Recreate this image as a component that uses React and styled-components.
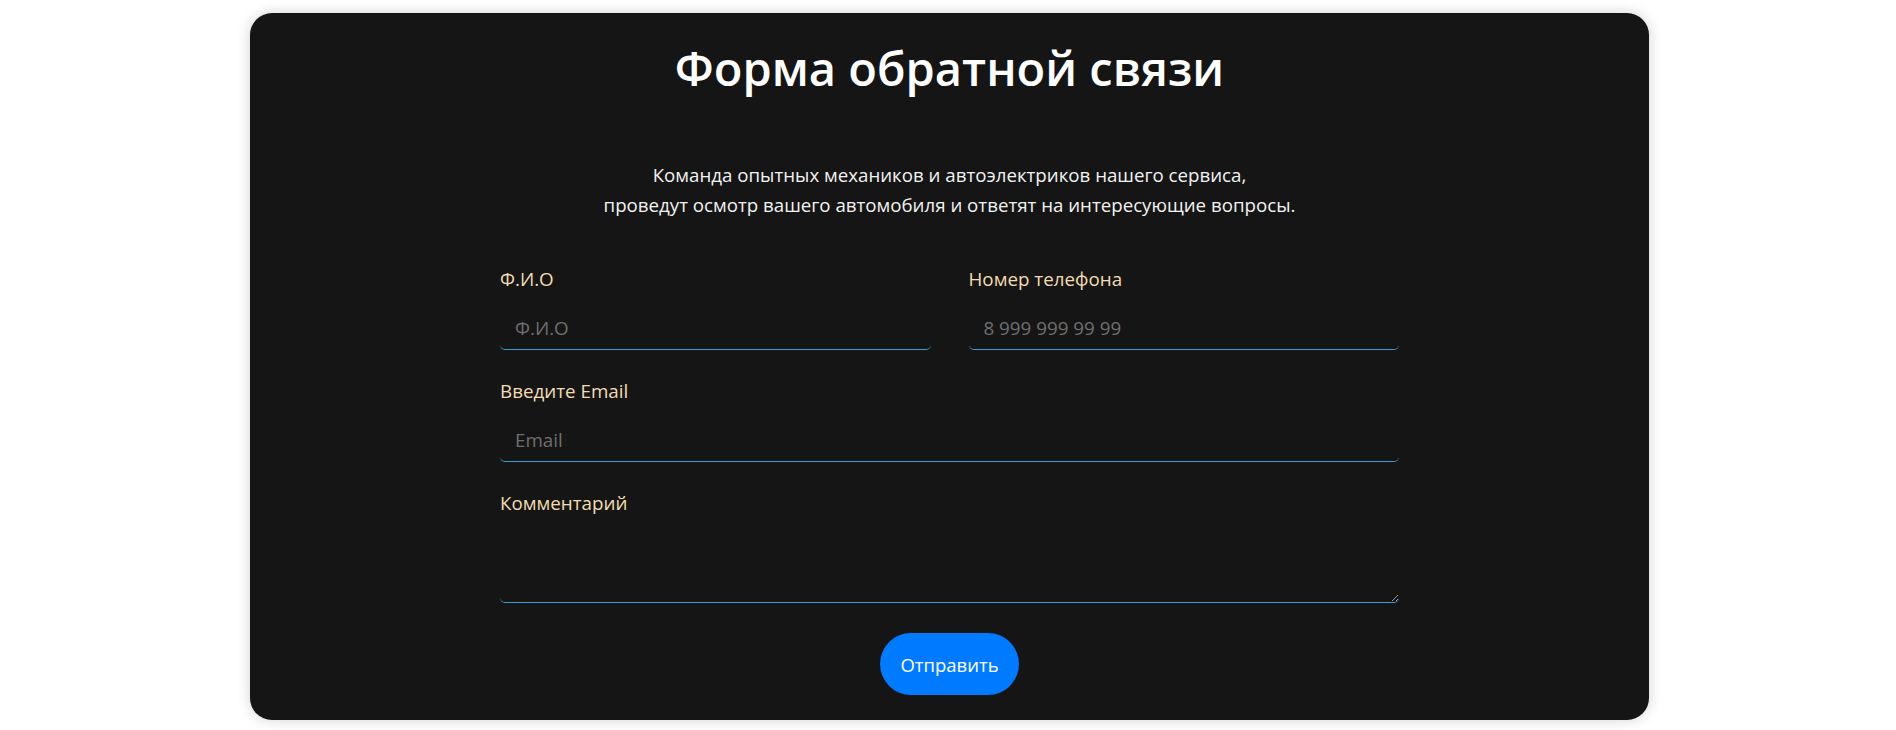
import React from 'react'
import styled, { createGlobalStyle } from 'styled-components'

const GlobalStyle = createGlobalStyle`
  * {
    box-sizing: border-box;
  }
  body {
    margin: 0;
    background: #ffffff;
    font-family: 'Open Sans', 'Noto Sans', sans-serif;
  }
`

const Page = styled.div`
  padding: 13px 0 10px 3px;
`

const Card = styled.section`
  width: 1399px;
  margin: 0 auto;
  padding: 27px 0 25px;
  background-color: #151515;
  border-radius: 22px;
  box-shadow: 0 0 14px rgba(0, 0, 0, 0.18);
  display: flex;
  flex-direction: column;
  align-items: center;
`

const Title = styled.h1`
  margin: 0;
  font-size: 47px;
  font-weight: 600;
  line-height: 57px;
  color: #ffffff;
  text-align: center;
`

const Subtitle = styled.p`
  margin: 63px 0 47px;
  font-size: 18.7px;
  line-height: 30px;
  color: #f2f2f2;
  text-align: center;
`

const Form = styled.form`
  width: 899px;
  display: flex;
  flex-direction: column;
  align-items: center;
`

const Row = styled.div`
  width: 100%;
  display: grid;
  grid-template-columns: ${props => (props.cols === 2 ? '1fr 1fr' : '1fr')};
  column-gap: 38px;
  margin-bottom: ${props => (props.last ? '30px' : '29px')};
`

const Field = styled.div`
  display: flex;
  flex-direction: column;
`

const Label = styled.label`
  font-size: 18.8px;
  line-height: 24px;
  color: #f3dcb3;
  margin-bottom: 15px;
`

const Input = styled.input`
  width: 100%;
  height: 44px;
  padding: 9px 15px;
  font-family: inherit;
  font-size: 18.8px;
  color: #ffffff;
  background: transparent;
  border: none;
  border-bottom: 1px solid #3b9bd2;
  border-radius: 5px;
  outline: none;

  &::placeholder {
    color: #6f6f6f;
  }
`

const TextArea = styled.textarea`
  width: 100%;
  height: 73px;
  padding: 9px 15px;
  font-family: inherit;
  font-size: 18.8px;
  color: #ffffff;
  background: transparent;
  border: none;
  border-bottom: 1px solid #3b9bd2;
  border-radius: 5px;
  outline: none;
  resize: vertical;
  color-scheme: dark;
`

const SubmitButton = styled.button`
  height: 62px;
  padding: 0 20px;
  font-family: inherit;
  font-size: 18.5px;
  color: #ffffff;
  background-color: #007bff;
  border: none;
  border-radius: 31px;
  cursor: pointer;
`

export default function App() {
  return (
    <>
      <GlobalStyle />
      <Page>
        <Card>
          <Title>Форма обратной связи</Title>
          <Subtitle>
            Команда опытных механиков и автоэлектриков нашего сервиса,
            <br />
            проведут осмотр вашего автомобиля и ответят на интересующие вопросы.
          </Subtitle>
          <Form onSubmit={e => e.preventDefault()}>
            <Row cols={2}>
              <Field>
                <Label htmlFor='fio'>Ф.И.О</Label>
                <Input id='fio' placeholder='Ф.И.О' />
              </Field>
              <Field>
                <Label htmlFor='phone'>Номер телефона</Label>
                <Input id='phone' placeholder='8 999 999 99 99' />
              </Field>
            </Row>
            <Row>
              <Field>
                <Label htmlFor='email'>Введите Email</Label>
                <Input id='email' placeholder='Email' />
              </Field>
            </Row>
            <Row last>
              <Field>
                <Label htmlFor='comment'>Комментарий</Label>
                <TextArea id='comment' />
              </Field>
            </Row>
            <SubmitButton type='submit'>Отправить</SubmitButton>
          </Form>
        </Card>
      </Page>
    </>
  )
}
